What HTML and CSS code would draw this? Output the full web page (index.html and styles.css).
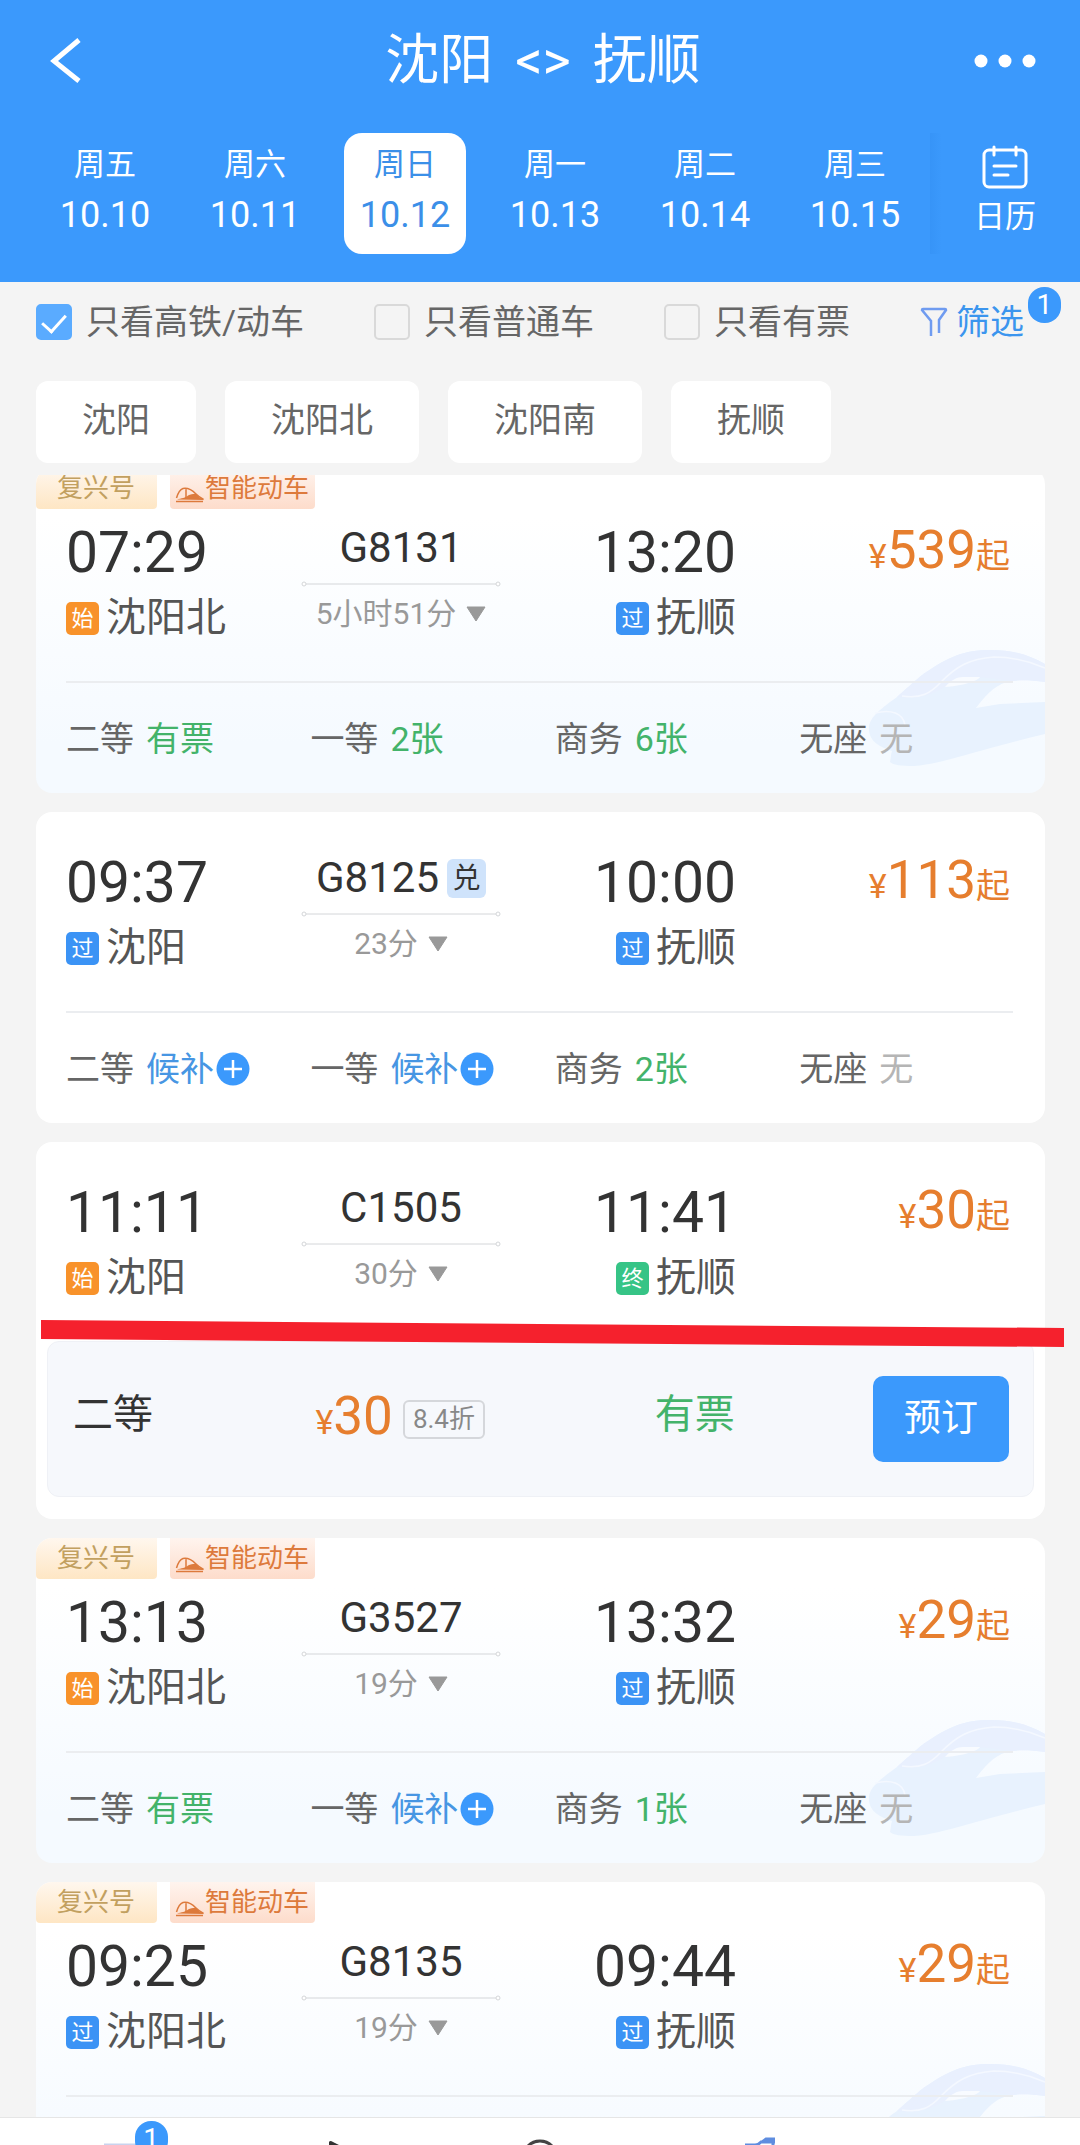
FILE: index.html
```html
<!DOCTYPE html>
<html lang="zh-CN">
<head>
    <meta charset="UTF-8">
    <meta name="viewport" content="width=device-width, initial-scale=1">
    <title>沈阳 - 抚顺</title>
    <link rel="stylesheet" href="styles.css">
</head>
<body>
    <!-- shared icons -->
    <svg class="sprite" aria-hidden="true">
        <symbol id="train-tag" viewBox="0 0 30 16">
            <path d="M1.500 11C3 6 5 2.500 8 1.500c5-1 9 1.500 13 5.500 2.500 2.500 5 4 7.500 5.500M11 2v9" fill="none" stroke="currentColor" stroke-width="1.500"/>
            <path d="M2 12.500c4-1 9-2 11-4 3-1 6-2 8-1.500 2 2.500 5 4.500 8 6z" fill="currentColor"/>
            <path d="M1 14.500h27" stroke="currentColor" stroke-width="1.500"/>
        </symbol>
        <symbol id="train-bg" viewBox="0 0 176 118">
            <path d="M0 82C-1 72 4 65 28 48C45 33 52 26 59 22C80 8 95 1 121 1C145 1 160 6 176 15V33C162 31 152 31 142 32C128 35 120 42 107 59L131 55L176 53V85C150 91 125 98 100 105C75 112 60 116 45 117C32 117 24 116 21 113C22 108 22 105 23 102C10 98 1 92 0 82z" fill="#e8f2fe"/>
            <path d="M28 48C45 33 52 26 59 22C80 8 95 1 121 1C145 1 160 6 176 15V33C162 31 152 31 142 32L111 28L76 38C60 48 45 50 28 48z" fill="#e9f0fe"/>
            <path d="M76 38C82 31 88 28 94 28H111C108 33 90 37 76 38z" fill="#f8fbff"/>
            <path d="M33 47C52 50 62 44 72 33C88 17 100 10 125 8C145 8 160 12 176 19M6 64C22 60 34 64 36 76" fill="none" stroke="#f4f8ff" stroke-width="1.500"/>
        </symbol>
        <symbol id="plus" viewBox="0 0 34 34">
            <circle cx="17" cy="17" r="16.500" fill="#3b99fc"/>
            <path d="M17 8v18M8 17h18" stroke="#fff" stroke-width="2.500"/>
        </symbol>
        <symbol id="route" viewBox="0 0 200 8">
            <path d="M5 4h190" stroke="#d4d6d9" stroke-width="1"/>
            <circle cx="3" cy="4" r="2" fill="#fff" stroke="#d4d6d9"/>
            <circle cx="197" cy="4" r="2" fill="#fff" stroke="#d4d6d9"/>
        </symbol>
        <symbol id="down" viewBox="0 0 20 16">
            <path d="M1 1h18L10 15z" fill="#999" stroke="#999" stroke-linejoin="round"/>
        </symbol>
    </svg>

    <header class="header">
        <div class="title-bar">
            <button class="icon-btn" type="button" aria-label="返回">
                <svg width="32" height="46" viewBox="0 0 32 46"><path d="M29 2L4 23l25 20" fill="none" stroke="#fff" stroke-width="5"/></svg>
            </button>
            <h1>沈阳<span>&lt;&gt;</span>抚顺</h1>
            <button class="icon-btn" type="button" aria-label="更多">
                <svg width="62" height="14" viewBox="0 0 62 14" fill="#fff"><circle cx="7" cy="7" r="6.500"/><circle cx="31" cy="7" r="6.500"/><circle cx="55" cy="7" r="6.500"/></svg>
            </button>
        </div>
        <nav class="dates">
            <a href="#"><span class="day">周五</span><span class="date">10.10</span></a>
            <a href="#"><span class="day">周六</span><span class="date">10.11</span></a>
            <a href="#" class="active"><span class="day">周日</span><span class="date">10.12</span></a>
            <a href="#"><span class="day">周一</span><span class="date">10.13</span></a>
            <a href="#"><span class="day">周二</span><span class="date">10.14</span></a>
            <a href="#"><span class="day">周三</span><span class="date">10.15</span></a>
            <a href="#" class="calendar">
                <svg width="46" height="44" viewBox="0 0 46 44" fill="none" stroke="#fff" stroke-width="3" stroke-linecap="round"><rect x="2" y="5" width="42" height="37" rx="5"/><path d="M12 2v8M34 2v8M12 21h22M12 30h14"/></svg>
                <span class="day">日历</span>
            </a>
        </nav>
    </header>

    <div class="filters">
        <label><input type="checkbox" checked>只看高铁/动车</label>
        <label><input type="checkbox">只看普通车</label>
        <label><input type="checkbox">只看有票</label>
        <button class="filter-btn" type="button">
            <svg width="28" height="30" viewBox="0 0 28 30" fill="none" stroke="#6f9bf0" stroke-width="2.500"><path d="M11 29V14L2 3q0-1 1-1h22q1 0 1 1l-7 10v13"/></svg>
            筛选
            <span class="badge">1</span>
        </button>
    </div>

    <div class="stations">
        <button type="button">沈阳</button>
        <button type="button">沈阳北</button>
        <button type="button">沈阳南</button>
        <button type="button">抚顺</button>
    </div>

    <main class="list">
        <article class="card fuxing">
            <svg class="train-bg" width="176" height="118"><use href="#train-bg"/></svg>
            <div class="tags">
                <span class="tag gold">复兴号</span>
                <span class="tag smart"><svg width="30" height="16"><use href="#train-tag"/></svg>智能动车</span>
            </div>
            <div class="journey">
                <div class="stop">
                    <div class="time">07:29</div>
                    <div class="station"><i class="mark start">始</i>沈阳北</div>
                </div>
                <div class="train">
                    <div class="train-no">G8131</div>
                    <svg class="route" width="200" height="8"><use href="#route"/></svg>
                    <div class="duration">5小时51分<svg width="20" height="16"><use href="#down"/></svg></div>
                </div>
                <div class="stop end">
                    <div class="time">13:20</div>
                    <div class="station"><i class="mark pass">过</i>抚顺</div>
                </div>
                <div class="price"><small>¥</small>539<small>起</small></div>
            </div>
            <div class="seats">
                <div>二等<span class="ok">有票</span></div>
                <div>一等<span class="ok">2张</span></div>
                <div>商务<span class="ok">6张</span></div>
                <div>无座<span class="none">无</span></div>
            </div>
        </article>

        <article class="card">
            <div class="journey">
                <div class="stop">
                    <div class="time">09:37</div>
                    <div class="station"><i class="mark pass">过</i>沈阳</div>
                </div>
                <div class="train">
                    <div class="train-no">G8125<i class="exchange">兑</i></div>
                    <svg class="route" width="200" height="8"><use href="#route"/></svg>
                    <div class="duration">23分<svg width="20" height="16"><use href="#down"/></svg></div>
                </div>
                <div class="stop end">
                    <div class="time">10:00</div>
                    <div class="station"><i class="mark pass">过</i>抚顺</div>
                </div>
                <div class="price"><small>¥</small>113<small>起</small></div>
            </div>
            <div class="seats">
                <div>二等<a href="#">候补<svg width="34" height="34"><use href="#plus"/></svg></a></div>
                <div>一等<a href="#">候补<svg width="34" height="34"><use href="#plus"/></svg></a></div>
                <div>商务<span class="ok">2张</span></div>
                <div>无座<span class="none">无</span></div>
            </div>
        </article>

        <article class="card">
            <div class="journey">
                <div class="stop">
                    <div class="time">11:11</div>
                    <div class="station"><i class="mark start">始</i>沈阳</div>
                </div>
                <div class="train">
                    <div class="train-no">C1505</div>
                    <svg class="route" width="200" height="8"><use href="#route"/></svg>
                    <div class="duration">30分<svg width="20" height="16"><use href="#down"/></svg></div>
                </div>
                <div class="stop end">
                    <div class="time">11:41</div>
                    <div class="station"><i class="mark last">终</i>抚顺</div>
                </div>
                <div class="price"><small>¥</small>30<small>起</small></div>
            </div>
            <div class="booking">
                <svg class="underline" viewBox="0 0 1023 28" preserveAspectRatio="none" aria-hidden="true"><path d="M0 0L1023 8V27L0 19z" fill="#f5212d"/></svg>
                <span class="seat-name">二等</span>
                <span class="seat-price"><span class="price"><small>¥</small>30</span><span class="discount">8.4折</span></span>
                <span class="seat-left">有票</span>
                <button class="book-btn" type="button">预订</button>
            </div>
        </article>

        <article class="card fuxing">
            <svg class="train-bg" width="176" height="118"><use href="#train-bg"/></svg>
            <div class="tags">
                <span class="tag gold">复兴号</span>
                <span class="tag smart"><svg width="30" height="16"><use href="#train-tag"/></svg>智能动车</span>
            </div>
            <div class="journey">
                <div class="stop">
                    <div class="time">13:13</div>
                    <div class="station"><i class="mark start">始</i>沈阳北</div>
                </div>
                <div class="train">
                    <div class="train-no">G3527</div>
                    <svg class="route" width="200" height="8"><use href="#route"/></svg>
                    <div class="duration">19分<svg width="20" height="16"><use href="#down"/></svg></div>
                </div>
                <div class="stop end">
                    <div class="time">13:32</div>
                    <div class="station"><i class="mark pass">过</i>抚顺</div>
                </div>
                <div class="price"><small>¥</small>29<small>起</small></div>
            </div>
            <div class="seats">
                <div>二等<span class="ok">有票</span></div>
                <div>一等<a href="#">候补<svg width="34" height="34"><use href="#plus"/></svg></a></div>
                <div>商务<span class="ok">1张</span></div>
                <div>无座<span class="none">无</span></div>
            </div>
        </article>

        <article class="card fuxing">
            <svg class="train-bg" width="176" height="118"><use href="#train-bg"/></svg>
            <div class="tags">
                <span class="tag gold">复兴号</span>
                <span class="tag smart"><svg width="30" height="16"><use href="#train-tag"/></svg>智能动车</span>
            </div>
            <div class="journey">
                <div class="stop">
                    <div class="time">09:25</div>
                    <div class="station"><i class="mark pass">过</i>沈阳北</div>
                </div>
                <div class="train">
                    <div class="train-no">G8135</div>
                    <svg class="route" width="200" height="8"><use href="#route"/></svg>
                    <div class="duration">19分<svg width="20" height="16"><use href="#down"/></svg></div>
                </div>
                <div class="stop end">
                    <div class="time">09:44</div>
                    <div class="station"><i class="mark pass">过</i>抚顺</div>
                </div>
                <div class="price"><small>¥</small>29<small>起</small></div>
            </div>
            <div class="seats"></div>
        </article>
    </main>

    <nav class="tabbar">
        <a href="#" aria-label="筛选">
            <svg width="60" height="28" viewBox="0 0 60 28"><path d="M4 27h48" stroke="#c9d3ee" stroke-width="3"/></svg>
            <span class="badge">1</span>
        </a>
        <a href="#" aria-label="发时">
            <svg width="60" height="28" viewBox="0 0 60 28"><path d="M24 28v-4q1-2 4 0l8 4z" fill="#333"/></svg>
        </a>
        <a href="#" aria-label="耗时">
            <svg width="60" height="28" viewBox="0 0 60 28"><circle cx="30" cy="40" r="17" fill="none" stroke="#444" stroke-width="3"/></svg>
        </a>
        <a href="#" aria-label="票价">
            <svg width="60" height="28" viewBox="0 0 60 28"><path d="M30 27h10q3 0 6-3h13v-3h-8l-4 3M58 21v7" fill="none" stroke="#5f8de0" stroke-width="3"/></svg>
        </a>
        <a href="#" aria-label="更多"></a>
    </nav>
</body>
</html>
```
FILE: styles.css
```css
* {
    box-sizing: border-box;
}

body {
    font-family: Roboto, "Noto Sans CJK SC", sans-serif;
    margin: 0;
    height: 100vh;
    overflow: hidden;
    display: flex;
    flex-direction: column;
    background-color: #f4f4f4;
    color: #333;
}

a {
    color: inherit;
    text-decoration: none;
}

button {
    font-family: inherit;
    border: none;
    padding: 0;
    cursor: pointer;
}

i {
    font-style: normal;
}

svg {
    display: block;
    flex: none;
}

.sprite {
    position: absolute;
    width: 0;
    height: 0;
}

/* header */
.header {
    background-color: #3b99fc;
    color: #fff;
    padding: 26px 0 28px;
}

.title-bar {
    display: flex;
    align-items: center;
    justify-content: space-between;
    padding: 0 44px 0 50px;
}

.title-bar h1 {
    margin: 0;
    font-size: 54px;
    line-height: 70px;
    font-weight: 400;
}

.title-bar h1 span {
    margin: 0 22px;
}

.icon-btn {
    display: flex;
    width: 62px;
    background: none;
}

.dates {
    display: flex;
    margin-top: 37px;
    padding-left: 30px;
}

.dates a {
    flex: 1;
    display: flex;
    flex-direction: column;
    align-items: center;
    gap: 8px;
    margin: 0 14px;
    padding: 12px 0 17px;
    border-radius: 18px;
}

.dates .active {
    background-color: #fff;
    color: #3b8fe8;
}

.day {
    font-size: 31px;
    line-height: 40px;
}

.date {
    font-size: 36px;
    line-height: 44px;
}

.dates .calendar {
    margin: 0;
    flex: 0 0 150px;
    border-radius: 0;
    background: linear-gradient(90deg, rgba(30, 120, 220, 0.15), rgba(30, 120, 220, 0) 12px);
}

/* filters */
.filters {
    display: flex;
    justify-content: space-between;
    padding: 16px 56px 0 36px;
    font-size: 34px;
    line-height: 48px;
    color: #666;
}

.filters label {
    display: flex;
    align-items: center;
    gap: 14px;
}

.filters input {
    appearance: none;
    width: 36px;
    height: 36px;
    margin: 0;
    border: 2px solid #d9d9d9;
    border-radius: 5px;
    display: flex;
    justify-content: center;
}

.filters input:checked {
    background-color: #5aabff;
    border-color: #5aabff;
}

.filters input:checked::before {
    content: "";
    width: 11px;
    height: 20px;
    margin-top: 3px;
    border: solid #fff;
    border-width: 0 3px 3px 0;
    transform: rotate(42deg);
}

.filter-btn {
    position: relative;
    display: flex;
    align-items: center;
    gap: 8px;
    background: none;
    font-size: 34px;
    line-height: 48px;
    color: #3b95ee;
}

.badge {
    position: absolute;
    min-width: 33px;
    height: 36px;
    border-radius: 16px;
    background-color: #3b99fc;
    color: #fff;
    font-size: 28px;
    line-height: 36px;
    text-align: center;
}

.filter-btn .badge {
    left: 100%;
    top: -11px;
    margin-left: 4px;
}

.stations {
    display: flex;
    gap: 29px;
    padding: 35px 36px 12px;
}

.stations button {
    padding: 0 46px 4px;
    border-radius: 12px;
    background-color: #fff;
    color: #666;
    font-size: 34px;
    line-height: 78px;
}

/* train list */
.list {
    flex: 1;
    min-height: 0;
    overflow: hidden;
    padding: 0 35px 0 36px;
}

.card {
    position: relative;
    margin-bottom: 19px;
    padding-top: 41px;
    border-radius: 16px;
    background-color: #fff;
}

/* list is scrolled a little way down */
.card:first-child {
    margin-top: -7px;
}

.fuxing {
    padding-top: 0;
    background: linear-gradient(#fff 15%, #f5faff 85%);
}

.train-bg {
    position: absolute;
    right: 0;
    bottom: 26px;
}

.tags {
    display: flex;
    gap: 13px;
    margin-bottom: 14px;
}

.tag {
    display: flex;
    align-items: center;
    font-size: 26px;
    line-height: 41px;
    border-radius: 0 0 4px 4px;
}

.gold {
    padding: 0 22px 0 21px;
    border-top-left-radius: 16px;
    color: #c2a05f;
    background: linear-gradient(#fff7ee, #fee6c4);
}

.smart {
    padding: 0 6px 0 5px;
    color: #dd7a3c;
    background: linear-gradient(#fff4ee, #fddccb);
}

.smart svg {
    margin-top: 12px;
}

.journey {
    display: grid;
    grid-template-columns: 1fr 200px 1fr 274px;
    padding: 0 35px 41px 30px;
}

.time {
    font-size: 57px;
    line-height: 60px;
}

.station {
    display: flex;
    align-items: center;
    gap: 7px;
    margin-top: 13px;
    font-size: 40px;
    line-height: 44px;
    color: #555;
}

.end {
    text-align: right;
}

.end .station {
    justify-content: flex-end;
}

.mark {
    width: 33px;
    height: 33px;
    border-radius: 5px;
    color: #fff;
    font-size: 22px;
    line-height: 33px;
    text-align: center;
}

.start {
    background-color: #f8922a;
}

.pass {
    background-color: #3b93f5;
}

.last {
    background-color: #36c486;
}

.train-no {
    display: flex;
    justify-content: center;
    align-items: center;
    gap: 8px;
    font-size: 42px;
    line-height: 50px;
}

.exchange {
    width: 39px;
    height: 39px;
    border-radius: 6px;
    background-color: #cfe3fb;
    font-size: 28px;
    line-height: 39px;
    text-align: center;
}

.route {
    margin-top: 7px;
}

.duration {
    display: flex;
    justify-content: center;
    align-items: center;
    gap: 10px;
    margin-top: 6px;
    font-size: 30px;
    line-height: 40px;
    color: #999;
}

.price {
    color: #e67e2e;
    font-size: 53px;
    line-height: 54px;
    text-align: right;
}

.price small {
    font-size: 34px;
}

.seats {
    position: relative;
    display: grid;
    grid-template-columns: 8fr 8fr 8fr 7fr;
    min-height: 112px;
    margin: 0 32px 0 30px;
    padding: 32px 0 30px;
    border-top: 2px solid #ebedf0;
    font-size: 34px;
    line-height: 48px;
    color: #666;
}

.seats div,
.seats a {
    display: flex;
    align-items: center;
}

.seats span,
.seats a {
    margin-left: 12px;
}

.seats svg {
    margin-left: 2px;
}

.ok {
    color: #43b36a;
}

.seats .none {
    color: #b5b5b5;
}

.seats a {
    color: #4796e3;
}

/* expanded booking row */
.card:has(.booking) {
    padding-bottom: 22px;
}

.booking {
    position: relative;
    display: grid;
    grid-template-columns: 10fr 14fr 9fr auto;
    align-items: center;
    margin: 0 11px;
    padding: 34px 24px 34px 25px;
    border: 1px solid #eff1f6;
    border-radius: 12px;
    background-color: #f6f8fc;
}

.underline {
    position: absolute;
    left: -7px;
    top: -22px;
    width: calc(100% + 38px);
    height: 28px;
}

.seat-name,
.seat-left {
    padding-bottom: 8px;
    font-size: 40px;
    line-height: 44px;
}

.seat-price {
    display: flex;
    align-items: center;
    gap: 10px;
}

.discount {
    padding: 0 8px;
    border: 2px solid #d5d7db;
    border-radius: 6px;
    color: #888;
    font-size: 26px;
    line-height: 35px;
}

.seat-left {
    color: #43b36a;
}

.book-btn {
    padding: 0 31px;
    border-radius: 10px;
    background-color: #3b99fc;
    color: #fff;
    font-size: 37px;
    line-height: 86px;
}

/* bottom bar */
.tabbar {
    flex: none;
    display: flex;
    height: 28px;
    overflow: hidden;
    padding: 0 27px;
    border-top: 1px solid #e6e6e6;
    background-color: #fff;
}

.tabbar a {
    position: relative;
    flex: 1;
    display: flex;
    justify-content: center;
}

.tabbar .badge {
    left: 50%;
    top: 3px;
    margin-left: 5px;
}
```
